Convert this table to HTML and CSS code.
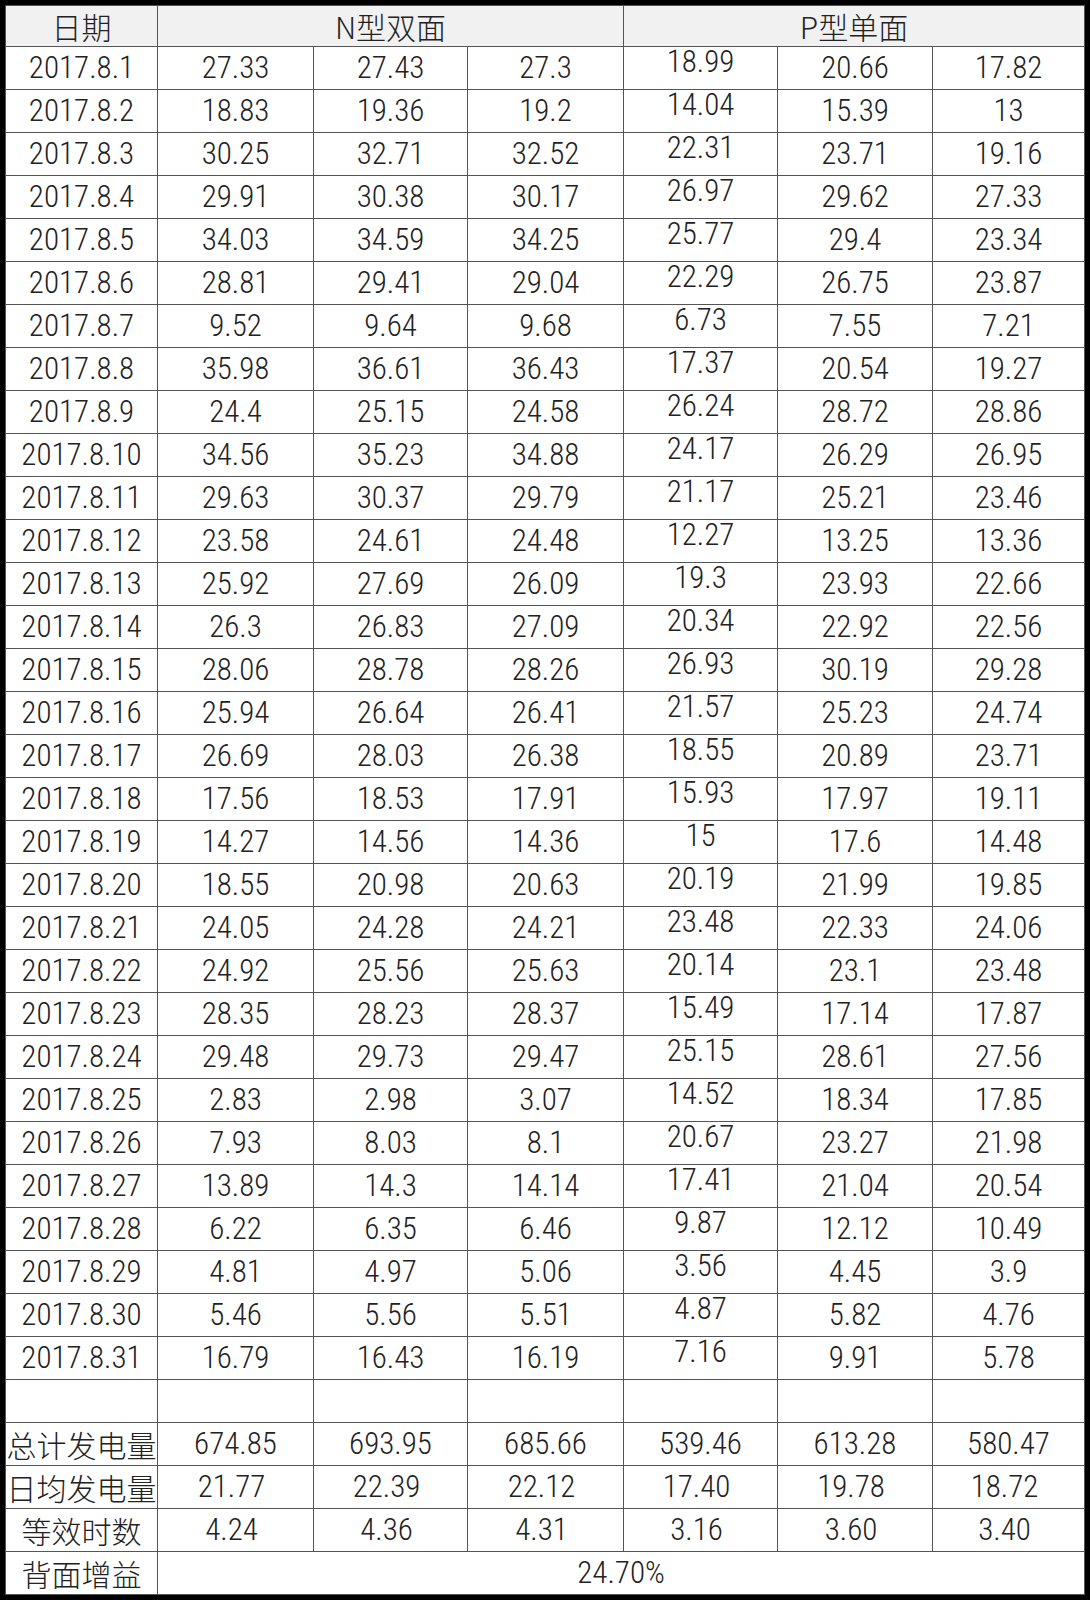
FILE: index.html
```html
<!DOCTYPE html>
<html lang="zh-CN">
<head>
<meta charset="utf-8">
<title>发电量对比</title>
<link rel="stylesheet" href="styles.css">
</head>
<body>
<table class="sheet">
<colgroup>
<col class="c-date"><col class="c-n1"><col class="c-n2"><col class="c-n3"><col class="c-p1"><col class="c-p2"><col class="c-p3">
</colgroup>
<thead>
<tr class="hd"><th>日期</th><th colspan="3">N型双面</th><th colspan="3">P型单面</th></tr>
</thead>
<tbody>
<tr><td>2017.8.1</td><td>27.33</td><td>27.43</td><td>27.3</td><td class="up">18.99</td><td>20.66</td><td>17.82</td></tr>
<tr><td>2017.8.2</td><td>18.83</td><td>19.36</td><td>19.2</td><td class="up">14.04</td><td>15.39</td><td>13</td></tr>
<tr><td>2017.8.3</td><td>30.25</td><td>32.71</td><td>32.52</td><td class="up">22.31</td><td>23.71</td><td>19.16</td></tr>
<tr><td>2017.8.4</td><td>29.91</td><td>30.38</td><td>30.17</td><td class="up">26.97</td><td>29.62</td><td>27.33</td></tr>
<tr><td>2017.8.5</td><td>34.03</td><td>34.59</td><td>34.25</td><td class="up">25.77</td><td>29.4</td><td>23.34</td></tr>
<tr><td>2017.8.6</td><td>28.81</td><td>29.41</td><td>29.04</td><td class="up">22.29</td><td>26.75</td><td>23.87</td></tr>
<tr><td>2017.8.7</td><td>9.52</td><td>9.64</td><td>9.68</td><td class="up">6.73</td><td>7.55</td><td>7.21</td></tr>
<tr><td>2017.8.8</td><td>35.98</td><td>36.61</td><td>36.43</td><td class="up">17.37</td><td>20.54</td><td>19.27</td></tr>
<tr><td>2017.8.9</td><td>24.4</td><td>25.15</td><td>24.58</td><td class="up">26.24</td><td>28.72</td><td>28.86</td></tr>
<tr><td>2017.8.10</td><td>34.56</td><td>35.23</td><td>34.88</td><td class="up">24.17</td><td>26.29</td><td>26.95</td></tr>
<tr><td>2017.8.11</td><td>29.63</td><td>30.37</td><td>29.79</td><td class="up">21.17</td><td>25.21</td><td>23.46</td></tr>
<tr><td>2017.8.12</td><td>23.58</td><td>24.61</td><td>24.48</td><td class="up">12.27</td><td>13.25</td><td>13.36</td></tr>
<tr><td>2017.8.13</td><td>25.92</td><td>27.69</td><td>26.09</td><td class="up">19.3</td><td>23.93</td><td>22.66</td></tr>
<tr><td>2017.8.14</td><td>26.3</td><td>26.83</td><td>27.09</td><td class="up">20.34</td><td>22.92</td><td>22.56</td></tr>
<tr><td>2017.8.15</td><td>28.06</td><td>28.78</td><td>28.26</td><td class="up">26.93</td><td>30.19</td><td>29.28</td></tr>
<tr><td>2017.8.16</td><td>25.94</td><td>26.64</td><td>26.41</td><td class="up">21.57</td><td>25.23</td><td>24.74</td></tr>
<tr><td>2017.8.17</td><td>26.69</td><td>28.03</td><td>26.38</td><td class="up">18.55</td><td>20.89</td><td>23.71</td></tr>
<tr><td>2017.8.18</td><td>17.56</td><td>18.53</td><td>17.91</td><td class="up">15.93</td><td>17.97</td><td>19.11</td></tr>
<tr><td>2017.8.19</td><td>14.27</td><td>14.56</td><td>14.36</td><td class="up">15</td><td>17.6</td><td>14.48</td></tr>
<tr><td>2017.8.20</td><td>18.55</td><td>20.98</td><td>20.63</td><td class="up">20.19</td><td>21.99</td><td>19.85</td></tr>
<tr><td>2017.8.21</td><td>24.05</td><td>24.28</td><td>24.21</td><td class="up">23.48</td><td>22.33</td><td>24.06</td></tr>
<tr><td>2017.8.22</td><td>24.92</td><td>25.56</td><td>25.63</td><td class="up">20.14</td><td>23.1</td><td>23.48</td></tr>
<tr><td>2017.8.23</td><td>28.35</td><td>28.23</td><td>28.37</td><td class="up">15.49</td><td>17.14</td><td>17.87</td></tr>
<tr><td>2017.8.24</td><td>29.48</td><td>29.73</td><td>29.47</td><td class="up">25.15</td><td>28.61</td><td>27.56</td></tr>
<tr><td>2017.8.25</td><td>2.83</td><td>2.98</td><td>3.07</td><td class="up">14.52</td><td>18.34</td><td>17.85</td></tr>
<tr><td>2017.8.26</td><td>7.93</td><td>8.03</td><td>8.1</td><td class="up">20.67</td><td>23.27</td><td>21.98</td></tr>
<tr><td>2017.8.27</td><td>13.89</td><td>14.3</td><td>14.14</td><td class="up">17.41</td><td>21.04</td><td>20.54</td></tr>
<tr><td>2017.8.28</td><td>6.22</td><td>6.35</td><td>6.46</td><td class="up">9.87</td><td>12.12</td><td>10.49</td></tr>
<tr><td>2017.8.29</td><td>4.81</td><td>4.97</td><td>5.06</td><td class="up">3.56</td><td>4.45</td><td>3.9</td></tr>
<tr><td>2017.8.30</td><td>5.46</td><td>5.56</td><td>5.51</td><td class="up">4.87</td><td>5.82</td><td>4.76</td></tr>
<tr><td>2017.8.31</td><td>16.79</td><td>16.43</td><td>16.19</td><td class="up">7.16</td><td>9.91</td><td>5.78</td></tr>
<tr><td></td><td></td><td></td><td></td><td></td><td></td><td></td></tr>
<tr><td class="lbl">总计发电量</td><td>674.85</td><td>693.95</td><td>685.66</td><td>539.46</td><td>613.28</td><td>580.47</td></tr>
<tr><td class="lbl">日均发电量</td><td class="sl">21.77</td><td class="sl">22.39</td><td class="sl">22.12</td><td class="sl">17.40</td><td class="sl">19.78</td><td class="sl">18.72</td></tr>
<tr><td class="lbl">等效时数</td><td class="sl">4.24</td><td class="sl">4.36</td><td class="sl">4.31</td><td class="sl">3.16</td><td class="sl">3.60</td><td class="sl">3.40</td></tr>
<tr class="last"><td class="lbl">背面增益</td><td colspan="6">24.70%</td></tr>
</tbody>
</table>
</body>
</html>
```

FILE: styles.css
```css
html {
  background: #000;
}
body {
  margin: 0;
  padding: 5px 6px 6px 5px;
  background: #000;
}
.sheet {
  width: 1079px;
  border-collapse: collapse;
  table-layout: fixed;
  background: #fff;
  font-family: "Roboto Condensed", "Noto Sans CJK SC", sans-serif;
  font-size: 31px;
  font-weight: 300;
  color: #222;
}
.c-date { width: 152px; }
.c-n1 { width: 156px; }
.c-n2 { width: 154px; }
.c-n3 { width: 156px; }
.c-p1 { width: 154px; }
.c-p2 { width: 155px; }
.c-p3 { width: 152px; }

.sheet th,
.sheet td {
  border: 1px solid #555;
  padding: 0;
  height: 42px;
  line-height: 30px;
  text-align: center;
  vertical-align: middle;
  white-space: nowrap;
}
.sheet tr.hd th {
  height: 40px;
  background: #f1f1f1;
  font-family: "Noto Sans CJK SC", sans-serif;
  font-size: 30px;
  font-weight: 300;
}
.sheet td.up {
  height: 30px;
  padding-bottom: 12px;
}
.sheet td.lbl {
  font-family: "Noto Sans CJK SC", sans-serif;
  font-size: 30px;
  font-weight: 300;
}
.sheet td.sl {
  padding-right: 8px;
}
```
